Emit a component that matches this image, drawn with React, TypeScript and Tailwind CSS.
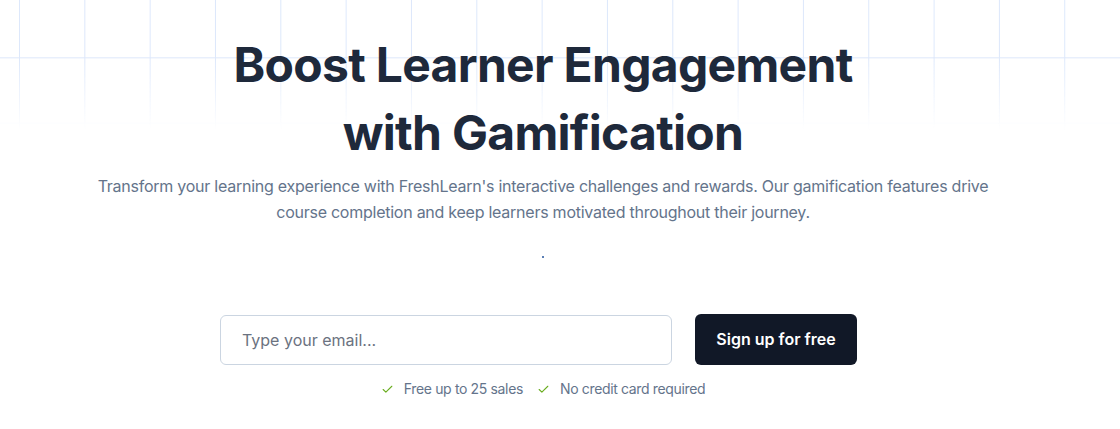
import { Check } from 'lucide-react';

export default function App() {
  return (
    <div className="relative min-h-[429px] w-full overflow-hidden bg-white font-['Inter',sans-serif]">
      {/* Grid backdrop */}
      <div className="pointer-events-none absolute inset-x-0 top-0 h-[130px] bg-[linear-gradient(to_right,#dde8fb_1px,transparent_1px),linear-gradient(to_bottom,#dde8fb_1px,transparent_1px)] bg-[size:65.33px_65.33px] bg-[position:19px_-8px] [mask-image:linear-gradient(to_bottom,black_45%,transparent)]" />

      <div className="relative flex w-[1086px] flex-col items-center pt-[31px]">
        <h1 className="text-center text-5xl font-bold leading-[68px] tracking-[-0.7px] text-[#1e293b]">
          Boost Learner Engagement
          <br />
          with Gamification
        </h1>
        <p className="mt-[6px] max-w-[920px] text-center text-base leading-[26px] tracking-[-0.25px] text-[#64748b]">
          Transform your learning experience with FreshLearn's interactive challenges and rewards. Our gamification
          features drive course completion and keep learners motivated throughout their journey.
        </p>

        <div className="mt-[31px] h-[2px] w-[2px] bg-[#5b7fb5]" />

        <div className="mt-[55px] flex items-center gap-[23px] pl-[1px] pr-[10px]">
          <input
            type="email"
            placeholder="Type your email..."
            className="mt-[2px] h-[50px] w-[452px] rounded-md border border-[#cbd5e1] px-[21px] text-base text-gray-700 placeholder:text-[#6b7280] outline-none"
          />
          <button className="h-[51px] w-[162px] rounded-md bg-[#111827] text-base font-semibold text-white">
            Sign up for free
          </button>
        </div>

        <div className="mt-[14px] flex items-center gap-[14px] text-sm tracking-[-0.35px] text-[#64748b]">
          <span className="flex items-center gap-[10px]">
            <Check className="h-[13px] w-[13px] text-[#6aad1f]" strokeWidth={2} />
            Free up to 25 sales
          </span>
          <span className="flex items-center gap-[10px]">
            <Check className="h-[13px] w-[13px] text-[#6aad1f]" strokeWidth={2} />
            No credit card required
          </span>
        </div>
      </div>
    </div>
  );
}
